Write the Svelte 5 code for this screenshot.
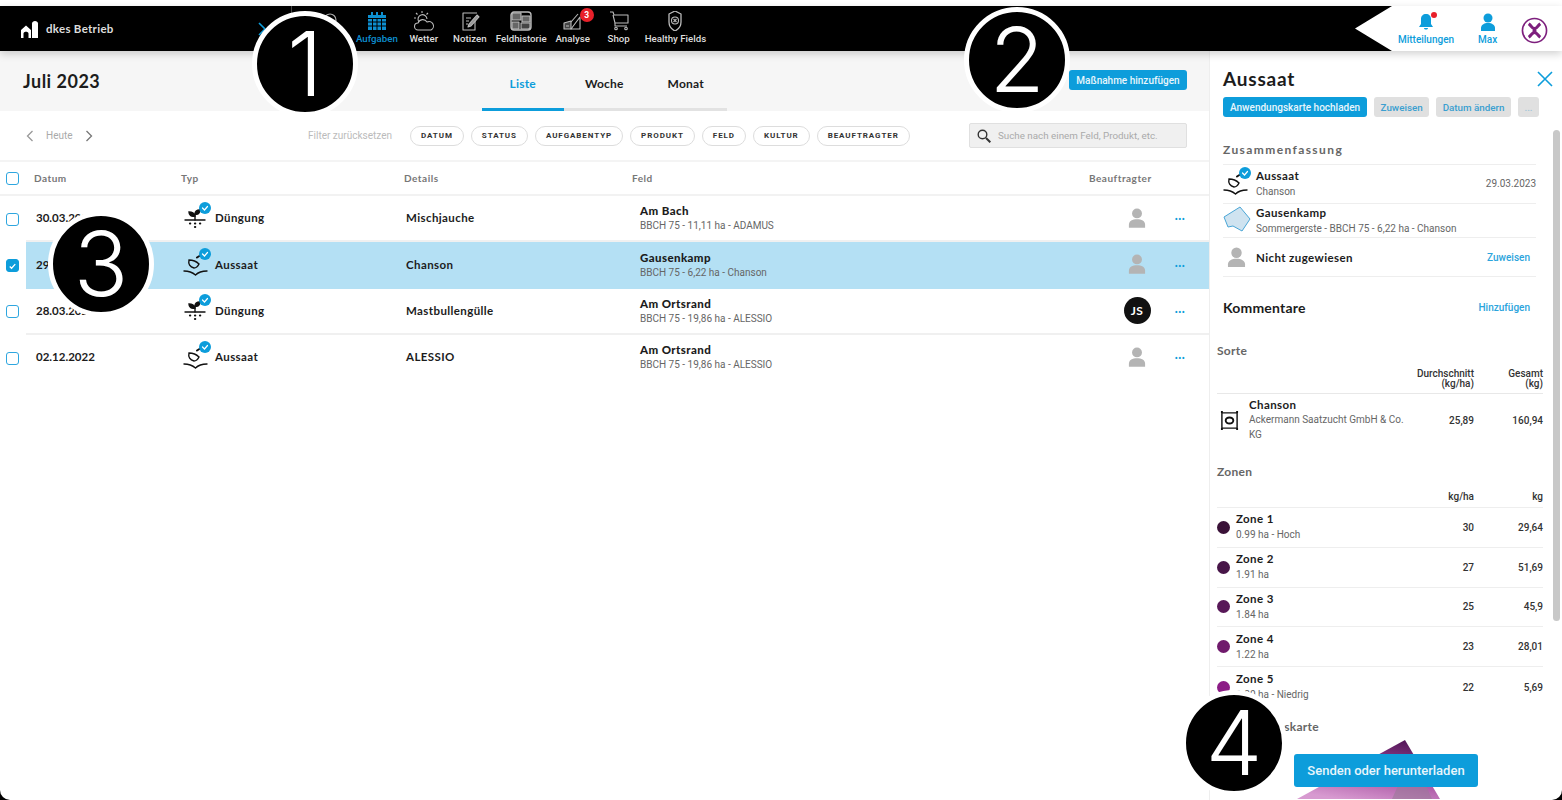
<script>
  const navItems = [
    { label: "Wetter", icon: "weather" },
    { label: "Notizen", icon: "notes" },
    { label: "Feldhistorie", icon: "history" },
    { label: "Analyse", icon: "analysis", badge: 3 },
    { label: "Shop", icon: "shop" },
    { label: "Healthy Fields", icon: "shield" },
  ];

  const filters = ["Datum", "Status", "Aufgabentyp", "Produkt", "Feld", "Kultur", "Beauftragter"];

  const rows = [
    { date: "30.03.2023", type: "Düngung", details: "Mischjauche", field: "Am Bach", sub: "BBCH 75 - 11,11 ha - ADAMUS" },
    { date: "29.03.2023", type: "Aussaat", details: "Chanson", field: "Gausenkamp", sub: "BBCH 75 - 6,22 ha - Chanson", selected: true },
    { date: "28.03.2023", type: "Düngung", details: "Mastbullengülle", field: "Am Ortsrand", sub: "BBCH 75 - 19,86 ha - ALESSIO", initials: "JS" },
    { date: "02.12.2022", type: "Aussaat", details: "ALESSIO", field: "Am Ortsrand", sub: "BBCH 75 - 19,86 ha - ALESSIO" },
  ];

  const zones = [
    { name: "Zone 1", sub: "0.99 ha - Hoch", rate: "30", total: "29,64", color: "#3a1238" },
    { name: "Zone 2", sub: "1.91 ha", rate: "27", total: "51,69", color: "#471548" },
    { name: "Zone 3", sub: "1.84 ha", rate: "25", total: "45,9", color: "#581858" },
    { name: "Zone 4", sub: "1.22 ha", rate: "23", total: "28,01", color: "#701a6c" },
    { name: "Zone 5", sub: "1.20 ha - Niedrig", rate: "22", total: "5,69", color: "#8c1c86" },
  ];
</script>

{#snippet typeIcon(type)}
  <svg class="type-icon" viewBox="0 0 30 32" width="30" height="32" fill="none" stroke="#111" stroke-width="1.4" stroke-linecap="round">
    {#if type === "Düngung"}
      <path d="M12 18v-6" />
      <path d="M12 14c-1-3-3-4-6-4 0 3 2 5 6 4z" fill="#111" />
      <path d="M12 12c0-3 2-4 5-4 0 3-2 5-5 4z" fill="#111" />
      <path d="M16.500 8l2.500-2.500" />
      <path d="M2 18h20" />
      <path d="M7 21.500h.2M12 21.500h.2M17 21.500h.2M12 25h.2" stroke-width="2.200" />
    {:else}
      <path d="M1 23c5 0 8 1 11.500 4 3-3 6-4 11.500-4" />
      <path d="M11 20c-4-1-6-4-5-8 4 0 7 1 10 4-1 2-3 4-5 4z" />
      <path d="M14 9.500l4-2.500" stroke-width="2" />
    {/if}
    <circle cx="22" cy="6" r="6" fill="#0d9ddb" stroke="none" />
    <path d="M19.500 6l2 2 3-3.500" stroke="#fff" stroke-width="1.200" />
  </svg>
{/snippet}

{#snippet person(size)}
  <svg viewBox="0 0 20 22" width={size} height={size * 1.1} fill="#b4b4b4">
    <circle cx="10" cy="6" r="5.500" />
    <path d="M1 22v-3.500C1 14.500 5 12.500 10 12.500s9 2 9 6V22z" />
  </svg>
{/snippet}

<div class="page">
  <header class="topbar">
    <div class="black">
      <div class="farm">
        <svg viewBox="0 0 18 18" width="18" height="18" fill="#fff">
          <path d="M0 10L5 5.500 10 10v8H7.500v-4.500c0-2.500-5-2.500-5 0V18H0z" />
          <path d="M11 3.500c0-3.500 6-3.500 6 0V18h-6z" />
        </svg>
        <span class="farm-name">dkes Betrieb</span>
        <svg class="chevron" viewBox="0 0 10 14" width="10" height="14" fill="none" stroke="#0d9ddb" stroke-width="1.6">
          <path d="M2 1l6 6-6 6" />
        </svg>
      </div>
      <nav class="nav">
        <div class="nav-item">
          <svg viewBox="0 0 22 20" width="22" height="20" fill="none" stroke="#aaa" stroke-width="1.2">
            <circle cx="11" cy="9" r="6" />
          </svg>
          <span>Felder</span>
        </div>
        <div class="nav-item active">
          <svg viewBox="0 0 22 20" width="22" height="20" fill="#0d8fd0">
            <path d="M2 4h18v15H2z" />
            <path d="M6 1v4M11 1v4M16 1v4" stroke="#0d8fd0" stroke-width="2" />
            <path d="M2 7.500h18M2 11h18M2 15h18M6.500 7v12M11 7v12M15.500 7v12" stroke="#000" stroke-width="1" />
          </svg>
          <span>Aufgaben</span>
        </div>
        {#each navItems as item}
          <div class="nav-item">
            <svg viewBox="0 0 22 20" width="22" height="20" fill="none" stroke="#bbb" stroke-width="1.1" stroke-linejoin="round">
              {#if item.icon === "weather"}
                <path d="M6 11a4.500 4.500 0 1 1 8-3" />
                <path d="M9 0v2M3 2l1.500 1.500M15 2l-1.500 1.500M1 7h2" />
                <path d="M5 19a3.500 3.500 0 0 1 0-7 5 5 0 0 1 9-1 4 4 0 0 1 4 8z" />
              {:else if item.icon === "notes"}
                <path d="M16 10v9H4V2h14" />
                <path d="M7 7h5M7 10h3M7 13h2" />
                <path d="M9 16l1-3 8-9 2 2-8 9z" fill="#999" />
              {:else if item.icon === "history"}
                <path d="M4 1h14a3 3 0 0 1 3 3v12a3 3 0 0 1-3 3H4a3 3 0 0 1-3-3V4a3 3 0 0 1 3-3z" stroke-width="1.400" />
                <path d="M2 9h9V2H4a2 2 0 0 0-2 2z" fill="#666" />
                <path d="M12 5h8v6h-8zM2 11h7v7H2z" fill="#666" />
                <path d="M11 12h9v4a2 2 0 0 1-2 2h-7z" fill="#444" />
              {:else if item.icon === "analysis"}
                <path d="M2 12l7-2v8H2z" fill="#444" />
                <path d="M9 18h9V6z" />
                <path d="M9 11l7-8" />
                <path d="M4 15h3" />
              {:else if item.icon === "shop"}
                <path d="M2 1h3l1 3h14v8H7L5 4" />
                <path d="M7 12v3h12" />
                <circle cx="8" cy="17.500" r="1.300" />
                <circle cx="18" cy="17.500" r="1.300" />
              {:else}
                <path d="M11 0l6 3v8c0 4-2 7-6 9-4-2-6-5-6-9V3z" stroke-width="1.300" />
                <circle cx="11" cy="9.500" r="3.500" />
                <path d="M9.500 8l3 3M12.500 8l-3 3" />
              {/if}
            </svg>
            <span>{item.label}</span>
            {#if item.badge}<b class="badge">{item.badge}</b>{/if}
          </div>
        {/each}
      </nav>
    </div>
    <div class="user">
      <div class="user-item">
        <svg viewBox="0 0 18 18" width="18" height="18" fill="#0d9ddb">
          <path d="M9 1c3 0 5 2 5 5v5l2 3H2l2-3V6c0-3 2-5 5-5zM7 15h4c0 2-4 2-4 0z" />
        </svg>
        <i class="dot"></i>
        <span>Mitteilungen</span>
      </div>
      <div class="user-item">
        <svg viewBox="0 0 18 18" width="18" height="18" fill="#0d9ddb">
          <circle cx="9" cy="5" r="4.500" />
          <path d="M2 18v-3c0-3 3-5 7-5s7 2 7 5v3z" />
        </svg>
        <span>Max</span>
      </div>
      <svg class="logo" viewBox="0 0 28 28" width="27" height="27" fill="none" stroke="#7d1f7d">
        <circle cx="14" cy="14" r="12.500" stroke-width="1.700" />
        <path d="M8 7c3 2 3 5 6 5s3-3 6-5M8 21c3-2 3-5 6-5s3 3 6 5M12 14h4" stroke-width="3.200" />
      </svg>
    </div>
  </header>

  <div class="body">
    <main class="main">
      <section class="title-band">
        <h1>Juli 2023</h1>
        <div class="tabs">
          <span class="tab current">Liste</span>
          <span class="tab">Woche</span>
          <span class="tab">Monat</span>
        </div>
        <button class="btn primary add">Maßnahme hinzufügen</button>
      </section>

      <section class="filters">
        <div class="pager">
          <svg viewBox="0 0 8 12" width="8" height="12" fill="none" stroke="#999" stroke-width="1.300"><path d="M6.500 1l-5 5 5 5" /></svg>
          <span>Heute</span>
          <svg viewBox="0 0 8 12" width="8" height="12" fill="none" stroke="#777" stroke-width="1.300"><path d="M1.500 1l5 5-5 5" /></svg>
        </div>
        <span class="reset">Filter zurücksetzen</span>
        <div class="chips">
          {#each filters as filter}
            <span class="chip">{filter}</span>
          {/each}
        </div>
        <div class="search">
          <svg viewBox="0 0 14 14" width="14" height="14" fill="none" stroke="#333" stroke-width="1.400">
            <circle cx="5.500" cy="5.500" r="4.300" />
            <path d="M9 9l4.300 4.300" stroke-width="2" />
          </svg>
          <span>Suche nach einem Feld, Produkt, etc.</span>
        </div>
      </section>

      <div class="table-head">
        <span class="check"></span>
        <span class="th th-date">Datum</span>
        <span class="th th-type">Typ</span>
        <span class="th th-details">Details</span>
        <span class="th th-field">Feld</span>
        <span class="th th-owner">Beauftragter</span>
      </div>

      {#each rows as row}
        <div class="row-wrap">
          <span class="check" class:checked={row.selected}>
            {#if row.selected}
              <svg viewBox="0 0 12 12" width="12" height="12" fill="none" stroke="#fff" stroke-width="1.400"><path d="M3 6.500l2 2 4-4.500" /></svg>
            {/if}
          </span>
          <div class="row" class:selected={row.selected}>
            <span class="cell-date">{row.date}</span>
            <span class="cell-type">
              {@render typeIcon(row.type)}
              <span>{row.type}</span>
            </span>
            <span class="cell-details">{row.details}</span>
            <div class="cell-field">
              <strong>{row.field}</strong>
              <small>{row.sub}</small>
            </div>
            <span class="cell-owner">
              {#if row.initials}
                <span class="initials">{row.initials}</span>
              {:else}
                {@render person(18)}
              {/if}
            </span>
            <span class="more">···</span>
          </div>
        </div>
      {/each}
    </main>

    <aside class="panel">
      <div class="panel-head">
        <h2>Aussaat</h2>
        <svg class="close" viewBox="0 0 16 16" width="16" height="16" fill="none" stroke="#0d9ddb" stroke-width="1.600"><path d="M1 1l14 14M15 1L1 15" /></svg>
      </div>
      <div class="panel-actions">
        <button class="btn primary small">Anwendungskarte hochladen</button>
        <button class="btn muted small">Zuweisen</button>
        <button class="btn muted small">Datum ändern</button>
        <button class="btn muted small faint">...</button>
      </div>

      <div class="summary">
        <h3>Zusammenfassung</h3>
        <div class="sum-row first">
          <span class="sum-icon">{@render typeIcon("Aussaat")}</span>
          <div class="sum-text">
            <strong>Aussaat</strong>
            <small>Chanson</small>
          </div>
          <span class="sum-date">29.03.2023</span>
        </div>
        <div class="sum-row second">
          <span class="sum-icon">
            <svg viewBox="0 0 28 28" width="28" height="28" fill="#cfe3f0" stroke="#4aa6d6" stroke-width="1">
              <path d="M1 11L17 1l10 12-8 12-9-5-5 1z" />
            </svg>
          </span>
          <div class="sum-text">
            <strong>Gausenkamp</strong>
            <small>Sommergerste - BBCH 75 - 6,22 ha - Chanson</small>
          </div>
        </div>
        <div class="sum-row third">
          <span class="sum-icon person">{@render person(19)}</span>
          <strong class="flex">Nicht zugewiesen</strong>
          <span class="link">Zuweisen</span>
        </div>
      </div>

      <div class="comments">
        <h4>Kommentare</h4>
        <span class="link">Hinzufügen</span>
      </div>

      <div class="details">
        <h3>Sorte</h3>
        <div class="tbl-head sorte-head">
          <span>Durchschnitt<br />(kg/ha)</span>
          <span>Gesamt<br />(kg)</span>
        </div>
        <div class="sorte-row">
          <svg viewBox="0 0 20 20" width="19" height="19" fill="none" stroke="#111" stroke-width="1.500">
            <path d="M2 2h16v16H2z" />
            <ellipse cx="10" cy="10" rx="4" ry="3.200" stroke-width="2" />
            <path d="M1 1h2M17 1h2M1 19h2M17 19h2" stroke-width="2" />
          </svg>
          <div class="sorte-name">
            <strong>Chanson</strong>
            <small>Ackermann Saatzucht GmbH &amp; Co. KG</small>
          </div>
          <span class="num">25,89</span>
          <span class="num">160,94</span>
        </div>

        <h3 class="zones-title">Zonen</h3>
        <div class="tbl-head zones-head">
          <span>kg/ha</span>
          <span>kg</span>
        </div>
        {#each zones as zone}
          <div class="zone">
            <i class="zone-dot" style="background: {zone.color}"></i>
            <div class="zone-name">
              <strong>{zone.name}</strong>
              <small>{zone.sub}</small>
            </div>
            <span class="num">{zone.rate}</span>
            <span class="num">{zone.total}</span>
          </div>
        {/each}

        <h3 class="map-title">Anwendungskarte</h3>
        <svg class="map" viewBox="0 0 150 60" width="150" height="60">
          <defs>
            <linearGradient id="zone-map" x1="0.7" y1="0" x2="0.3" y2="1">
              <stop offset="0" stop-color="#55185a" />
              <stop offset="0.5" stop-color="#a34a9c" />
              <stop offset="1" stop-color="#d79ad0" />
            </linearGradient>
          </defs>
          <path d="M0 60L108 1l35 59z" fill="url(#zone-map)" />
          <path d="M95 60l10-22 22 4 8 18z" fill="#9a7a98" opacity="0.6" />
        </svg>
      </div>

      <i class="scrollbar"></i>
      <button class="btn primary send">Senden oder herunterladen</button>
    </aside>
  </div>

  <div class="step s1">1</div>
  <div class="step s2">2</div>
  <div class="step s3">3</div>
  <div class="step s4">4</div>
</div>

<style>
  :global(body) {
    margin: 0;
    background: #000;
  }

  .page {
    --blue: #0d9ddb;
    --head: "Lato", "Noto Sans", sans-serif;
    --text: "Roboto", "Liberation Sans", sans-serif;

    position: relative;
    overflow: hidden;

    display: flex;
    flex-direction: column;

    width: 1562px;
    height: 800px;
    padding-top: 6px;
    box-sizing: border-box;
    border-radius: 0 0 10px 10px;

    background: #fff;
    font-family: var(--text);
    color: #1c1c1c;
  }

  .topbar {
    position: relative;
    z-index: 2;

    flex: 0 0 45px;
    display: flex;

    box-shadow: 0 3px 8px rgba(0, 0, 0, 0.18);
    background: #fff;
  }

  .black {
    flex: 0 0 1392px;
    display: flex;

    background: #000;
    clip-path: polygon(0 0, 100% 0, calc(100% - 37px) 50%, 100% 100%, 0 100%);
  }

  .farm {
    flex: 0 0 292px;
    display: flex;
    align-items: center;
    gap: 7px;

    box-sizing: border-box;
    padding: 0 24px 0 21px;
    border-right: 1px solid #444;
  }

  .farm-name {
    flex: 1;
    font: 700 11.500px var(--head);
    letter-spacing: 0.3px;
    color: #ddd;
  }

  .nav {
    display: flex;
    padding-left: 15px;
  }

  .nav-item {
    position: relative;

    display: flex;
    flex-direction: column;
    align-items: center;
    justify-content: flex-end;
    gap: 2px;

    box-sizing: border-box;
    min-width: 46px;
    padding: 0 3px 7px;

    font-size: 9.700px;
    font-weight: 500;
    color: #ddd;
    white-space: nowrap;
  }

  .nav-item.active {
    color: #0d8fd0;
  }

  .badge {
    position: absolute;
    top: 2px;
    left: 30px;

    width: 14px;
    height: 14px;
    border-radius: 50%;

    background: #e8202a;
    color: #fff;
    font-size: 8.500px;
    line-height: 14px;
    text-align: center;
  }

  .user {
    flex: 1;
    display: flex;
    align-items: center;

    padding-left: 5px;
  }

  .user-item {
    position: relative;

    display: flex;
    flex-direction: column;
    align-items: center;
    gap: 3px;

    font-size: 10px;
    font-weight: 500;
    color: var(--blue);
  }

  .user-item:first-child {
    width: 58px;
  }

  .user-item:nth-child(2) {
    margin-left: 23px;
  }

  .dot {
    position: absolute;
    top: -1px;
    left: 34px;

    width: 6px;
    height: 6px;
    border-radius: 50%;
    background: #e8202a;
  }

  .logo {
    margin-left: 24px;
    margin-top: 3px;
  }

  .body {
    flex: 1;
    display: flex;
    min-height: 0;
  }

  .main {
    flex: 0 0 1209px;
  }

  .title-band {
    display: flex;
    align-items: center;

    box-sizing: border-box;
    height: 60px;
    padding: 0 22px 0 23px;

    background: #f6f6f6;
  }

  h1 {
    flex: 0 0 459px;
    margin: 0;
    font: 700 18px var(--head);
    letter-spacing: 0.5px;
  }

  .tabs {
    align-self: flex-end;

    display: flex;
    height: 59px;
    border-bottom: 3px solid #e2e2e2;
    box-sizing: border-box;
  }

  .tab {
    position: relative;

    width: 81.500px;
    padding-top: 24px;
    box-sizing: border-box;

    font: 700 12px var(--head);
    letter-spacing: 0.2px;
    text-align: center;
  }

  .tab.current {
    color: var(--blue);
  }

  .tab.current::after {
    content: "";
    position: absolute;
    left: 0;
    right: 0;
    bottom: -3px;

    height: 3px;
    background: var(--blue);
  }

  .btn {
    border: 0;
    border-radius: 3px;
    font-family: var(--text);
    font-weight: 500;
    white-space: nowrap;
  }

  .btn.primary {
    background: var(--blue);
    color: #e8f6fc;
  }

  .add {
    margin-left: auto;
    margin-bottom: 2px;
    width: 118px;
    height: 20px;
    padding: 0;
    font-size: 10px;
  }

  .filters {
    display: flex;
    align-items: center;

    box-sizing: border-box;
    height: 51px;
    padding: 0 22px 0 26px;
    border-bottom: 2px solid #f4f4f4;
  }

  .pager {
    flex: 0 0 282px;
    display: flex;
    align-items: center;
    gap: 12px;

    font-size: 10px;
    color: #aaa;
  }

  .reset {
    flex: 0 0 102px;
    font-size: 10px;
    color: #bbb;
  }

  .chips {
    display: flex;
    gap: 7px;
  }

  .chip {
    height: 18px;
    padding: 0 10px;
    box-sizing: content-box;
    border: 1px solid #ddd;
    border-radius: 11px;

    font-size: 8px;
    font-weight: 700;
    line-height: 18px;
    letter-spacing: 0.920px;
    text-transform: uppercase;
    color: #333;
  }

  .search {
    margin-left: auto;

    display: flex;
    align-items: center;
    gap: 7px;

    box-sizing: border-box;
    width: 218px;
    height: 25px;
    padding: 0 7px;
    border: 1px solid #e0e0e0;
    border-radius: 2px;

    background: #f0f0f0;
    font-size: 9.800px;
    color: #aaa;
  }

  .table-head {
    position: relative;

    display: flex;
    align-items: center;

    height: 32px;
    border-bottom: 2px solid #f2f2f2;
  }

  .check {
    flex: 0 0 auto;

    display: flex;
    align-items: center;
    justify-content: center;

    box-sizing: border-box;
    width: 13px;
    height: 13px;
    margin: 0 7px 0 6px;
    border: 1.500px solid #2ea6df;
    border-radius: 3px;
  }

  .check.checked {
    background: var(--blue);
    border-color: var(--blue);
  }

  .th {
    font: 700 10px var(--head);
    letter-spacing: 0.500px;
    color: #777;
  }

  .th-date {
    flex: 0 0 147px;
    margin-left: 8px;
  }

  .th-type {
    flex: 0 0 223px;
  }

  .th-details {
    flex: 0 0 228px;
  }

  .th-field {
    flex: 0 0 457px;
  }

  .row-wrap {
    display: flex;
    align-items: center;
  }

  .row-wrap:last-child .row {
    border-bottom-color: transparent;
  }

  .row {
    flex: 1;

    display: flex;
    align-items: center;

    box-sizing: border-box;
    height: 46.400px;
    padding-left: 10px;
    padding-bottom: 1px;
    border-bottom: 2px solid #f0f0f0;

    font: 700 11.500px var(--head);
    letter-spacing: 0.400px;
  }

  .row.selected {
    background: #b4e0f4;
    border-bottom-color: #b4e0f4;
  }

  .cell-date {
    flex: 0 0 147px;
    letter-spacing: 0;
  }

  .cell-type {
    flex: 0 0 223px;
    display: flex;
    align-items: center;
    gap: 2px;
  }

  .cell-details {
    flex: 0 0 234px;
  }

  .cell-field {
    flex: 0 0 477px;
    display: flex;
    flex-direction: column;
    gap: 3px;
  }

  small {
    font-family: var(--text);
    font-size: 10px;
    font-weight: 400;
    letter-spacing: 0;
    color: #666;
  }

  .cell-owner {
    flex: 0 0 40px;
    display: flex;
    justify-content: center;
  }

  .initials {
    width: 27px;
    height: 27px;
    border-radius: 50%;

    background: #111;
    color: #fff;
    font-size: 12px;
    line-height: 27px;
    text-align: center;
  }

  .more {
    flex: 0 0 46px;
    color: var(--blue);
    font-size: 11px;
    text-align: center;
  }

  .panel {
    position: relative;
    z-index: 1;

    flex: 1;
    overflow: hidden;

    border-left: 1px solid #eee;
  }

  .panel-head {
    display: flex;
    align-items: center;
    justify-content: space-between;

    padding: 16px 9px 0 13px;
  }

  h2 {
    margin: 0;
    font: 700 19px var(--head);
    letter-spacing: 0.800px;
  }

  .panel-actions {
    display: flex;
    gap: 7px;

    margin-top: 7px;
    padding-left: 13px;
  }

  .btn.small {
    height: 20px;
    padding: 0 7px;
    font-size: 10px;
  }

  .btn.muted {
    padding: 0 6.500px;
    font-size: 9.800px;
    background: #e0e0e0;
    color: #3a9fd0;
  }

  .btn.faint {
    color: #9fc4d8;
  }

  .summary {
    padding: 25px 26px 0 13px;
  }

  .summary h3 {
    letter-spacing: 1.400px;
  }

  h3 {
    margin: 0;
    font: 700 12px var(--head);
    letter-spacing: 0.300px;
    color: #666;
  }

  .sum-row {
    display: flex;
    align-items: center;
    box-sizing: border-box;
    border-top: 1px solid #eee;
  }

  .sum-row.first {
    height: 39px;
    margin-top: 7px;
    padding-bottom: 2px;
  }

  .sum-row.second {
    height: 34px;
    padding-bottom: 1px;
  }

  .sum-row.third {
    height: 40px;
    border-bottom: 1px solid #eee;
    padding-right: 6px;
  }

  .sum-icon {
    flex: 0 0 33px;
    display: flex;
  }

  .sum-icon.person {
    padding-left: 4px;
    flex-basis: 29px;
  }

  .sum-text {
    flex: 1;
    display: flex;
    flex-direction: column;
    gap: 4px;
  }

  .sum-row strong,
  .sorte-name strong,
  .zone-name strong {
    font: 700 11.500px var(--head);
    letter-spacing: 0.400px;
  }

  .flex {
    flex: 1;
  }

  .sum-date {
    font-size: 10px;
    color: #666;
  }

  .link {
    font-size: 10px;
    font-weight: 500;
    color: #2ba4dc;
  }

  .comments {
    display: flex;
    align-items: center;
    justify-content: space-between;

    padding: 22px 32px 0 13px;
  }

  h4 {
    margin: 0;
    font: 700 14px var(--head);
    letter-spacing: 0.200px;
  }

  .details {
    padding: 27px 19px 0 7px;
  }

  .tbl-head {
    display: flex;
    justify-content: flex-end;

    font-size: 10px;
    font-weight: 500;
    color: #333;
    text-align: right;
  }

  .tbl-head span:last-child {
    flex: 0 0 69px;
  }

  .sorte-head {
    margin-top: 11px;
    padding-bottom: 4px;
    border-bottom: 1px solid #e8e8e8;
    line-height: 10px;
  }

  .sorte-row {
    display: flex;
    align-items: center;
    padding-top: 4px;
  }

  .sorte-row svg {
    flex: 0 0 19px;
    margin-left: 3px;
    margin-right: 10px;
  }

  .sorte-name {
    flex: 1;
    display: flex;
    flex-direction: column;
    gap: 1px;
    max-width: 165px;
  }

  .sorte-name small {
    line-height: 15px;
  }

  .num {
    font-size: 10px;
    font-weight: 500;
    color: #333;
    text-align: right;
  }

  .sorte-row .num:nth-of-type(1) {
    flex: 0 0 27px;
    margin-left: auto;
  }

  .sorte-row .num:nth-of-type(2),
  .zone .num:nth-of-type(2) {
    flex: 0 0 69px;
  }

  .zones-title {
    margin-top: 22px;
  }

  .zones-head {
    margin-top: 12px;
    padding-bottom: 5px;
    border-bottom: 1px solid #eee;
  }

  .zone {
    display: flex;
    align-items: center;

    height: 39.800px;
    box-sizing: border-box;
    border-bottom: 1px solid #eee;
  }

  .zone:last-of-type {
    border-bottom: 0;
  }

  .zone-dot {
    flex: 0 0 13px;
    height: 13px;
    margin-right: 6px;
    border-radius: 50%;
  }

  .zone-name {
    flex: 1;
    display: flex;
    flex-direction: column;
    gap: 4px;
    padding-bottom: 2px;
  }

  .zone .num:nth-of-type(1) {
    flex: 0 0 30px;
  }

  .map-title {
    margin-top: 12px;
  }

  .map {
    display: block;
    margin: 5px 0 0 80px;
  }

  .scrollbar {
    position: absolute;
    top: 79px;
    right: 2px;

    width: 7px;
    height: 491px;
    border-radius: 4px;
    background: #c8c8c8;
  }

  .send {
    position: absolute;
    left: 84px;
    bottom: 13px;

    width: 184px;
    height: 33px;
    font-size: 13px;
  }

  /* annotation markers over the screenshot */
  .step {
    position: absolute;
    z-index: 5;

    box-sizing: border-box;
    width: 106px;
    height: 106px;
    border: 5px solid #fff;
    border-radius: 50%;

    background: #000;
    color: #fff;
    font: 300 90px/96px "Inter", "Liberation Sans", sans-serif;
    text-align: center;
  }

  .s1 { left: 252px; top: 11px; }
  .s2 { left: 964px; top: 7px; }
  .s3 { left: 48px; top: 211px; }
  .s4 { left: 1181px; top: 690px; }
</style>
